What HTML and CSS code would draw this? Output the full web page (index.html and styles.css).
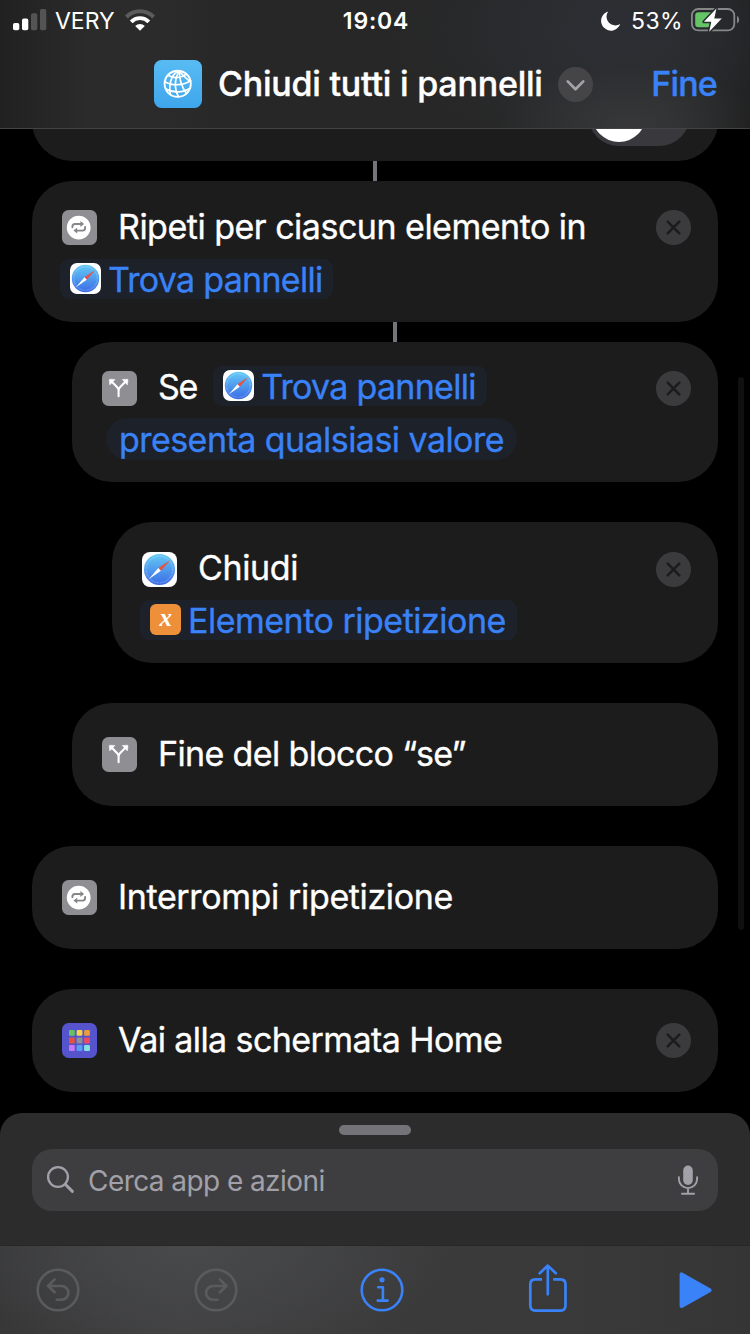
FILE: index.html
```
<!DOCTYPE html>
<html lang="it">
<head>
<meta charset="utf-8">
<title>Chiudi tutti i pannelli</title>
<link rel="stylesheet" href="styles.css">
</head>
<body>
<svg class="defs" width="0" height="0" aria-hidden="true">
  <defs>
    <linearGradient id="safari-blue" x1="0" y1="0" x2="0" y2="1">
      <stop offset="0" stop-color="#63cbf6"/>
      <stop offset="1" stop-color="#3b6be6"/>
    </linearGradient>
    <symbol id="i-safari" viewBox="0 0 35 35">
      <rect width="35" height="35" rx="8" fill="#fff"/>
      <circle cx="17.5" cy="17.5" r="15.5" fill="url(#safari-blue)"/>
      <circle cx="17.5" cy="17.5" r="13.3" fill="none" stroke="#fff" stroke-opacity=".3" stroke-width="1.4" stroke-dasharray=".7 .7"/>
      <path d="M28.5 8 18.9 18.8 16.3 16.1Z" fill="#e8503f"/>
      <path d="M6.7 27.3 16.3 16.1 18.9 18.8Z" fill="#fff"/>
    </symbol>
    <symbol id="i-repeat" viewBox="0 0 35 35">
      <rect width="35" height="35" rx="6.5" fill="#8e8e93"/>
      <circle cx="16.7" cy="17.6" r="11.9" fill="#fff"/>
      <g fill="none" stroke="#85858a" stroke-width="1.9" stroke-linecap="round">
        <path d="M10.4 17.2V16.6Q10.4 14 13 14H19"/>
        <path d="M23.1 17V18Q23.1 20.6 20.5 20.6H14.5"/>
      </g>
      <path d="M18.4 11.1V16.9L22.1 14ZM15.2 17.7V23.5L11.4 20.6Z" fill="#85858a"/>
    </symbol>
    <symbol id="i-branch" viewBox="0 0 35 35">
      <rect width="35" height="35" rx="6.5" fill="#8e8e93"/>
      <path d="M16.6 25.2V19.6Q16.6 17.6 15.2 16.2L9.6 10.6M16.6 19.6Q16.6 17.6 18 16.2L23.6 10.6" fill="none" stroke="#fff" stroke-width="2.1" stroke-linecap="round"/>
      <path d="M7.2 9Q7.2 8.2 8 8.2L13 8.5 7.8 13.9ZM26 9Q26 8.2 25.2 8.2L20.2 8.5 25.4 13.9Z" fill="#fff" stroke="#fff" stroke-width=".5" stroke-linejoin="round"/>
    </symbol>
    <symbol id="i-close" viewBox="0 0 35 35">
      <circle cx="17.5" cy="17.5" r="17.5" fill="#3b3b3d"/>
      <path d="M11.7 11.7 23.3 23.3M23.3 11.7 11.7 23.3" stroke="#1c1c1d" stroke-width="2.6" stroke-linecap="round"/>
    </symbol>
  </defs>
</svg>

<div class="screen">
  <header class="header">
    <div class="status">
      <div class="status-left">
        <svg class="signal" width="34" height="22" viewBox="0 0 34 22">
          <rect x="0" y="14" width="6.3" height="7.3" rx="1.8" fill="#fff"/>
          <rect x="9" y="9.6" width="6.3" height="11.7" rx="1.8" fill="#fff"/>
          <rect x="18" y="4.3" width="6.3" height="17" rx="1.8" fill="#545454"/>
          <rect x="27" y="0" width="6.3" height="21.3" rx="1.8" fill="#545454"/>
        </svg>
        <span class="carrier">VERY</span>
        <svg class="wifi" width="30" height="22" viewBox="0 0 30 22">
          <g fill="none">
            <path d="M1.4 8A19.2 19.2 0 0 1 28.6 8" stroke="#5c5c5c" stroke-width="4"/>
            <path d="M6.2 12.8A12.4 12.4 0 0 1 23.8 12.8" stroke="#fff" stroke-width="3.9"/>
          </g>
          <path d="M10.2 17A6.9 6.9 0 0 1 19.8 17L15 21.8Z" fill="#fff"/>
        </svg>
      </div>
      <span class="clock">19:04</span>
      <div class="status-right">
        <svg class="moon" width="20" height="20" viewBox="0 0 20 20">
          <path d="M7.2.4A9.8 9.8 0 1 0 19.2 12.9 8.8 8.8 0 0 1 7.2.4Z" fill="#fff"/>
        </svg>
        <span class="percent">53%</span>
        <svg class="battery" width="49" height="26" viewBox="0 0 49 26">
          <rect x=".9" y="2" width="42.4" height="21.4" rx="6.4" fill="none" stroke="#868789" stroke-width="1.8"/>
          <path d="M46 8.8Q48.2 10.3 48.2 12.7T46 16.6Z" fill="#868789"/>
          <path d="M7.5 5.3H20.6V20.2H7.5Q4.2 20.2 4.2 16.9V8.6Q4.2 5.3 7.5 5.3Z" fill="#65c466"/>
          <path d="M25.4 1.5 12.9 14.8H20.3L18.2 24.8 30.7 11.6H23.3Z" fill="#fff" stroke="#2a2c2f" stroke-width="3" stroke-linejoin="round" paint-order="stroke"/>
        </svg>
      </div>
    </div>
    <div class="nav">
      <svg class="app-icon" width="48" height="48" viewBox="0 0 48 48">
        <defs>
          <linearGradient id="sky" x1="0" y1="0" x2="0" y2="1">
            <stop offset="0" stop-color="#58bbf3"/>
            <stop offset="1" stop-color="#3ea6ec"/>
          </linearGradient>
        </defs>
        <rect width="48" height="48" rx="7.5" fill="url(#sky)"/>
        <g fill="none" stroke="#fff" stroke-width="1.7" stroke-linecap="round">
          <circle cx="23.7" cy="23.8" r="13.1" stroke-width="1.9"/>
          <path d="M25.3 11.2C19.5 12.5 14.2 20.5 16.3 34.2"/>
          <path d="M25.3 11.2C20.8 17.5 19.8 28.5 24.5 36.6"/>
          <path d="M25.3 11.2C25.3 19 28.2 27.5 32.3 33.3"/>
          <path d="M25.3 11.2C28.5 14.5 32.5 19.5 36.3 21.2"/>
          <path d="M14.6 15.5C20 19 27.5 17.8 32.3 14.2"/>
          <path d="M11 21.8C17.5 26 29.5 25.8 36.6 20.5"/>
          <path d="M12 29C18.5 33 29.5 32.8 35.6 28.5"/>
        </g>
      </svg>
      <h1 class="nav-title">Chiudi tutti i pannelli</h1>
      <svg class="chevron" width="35" height="35" viewBox="0 0 35 35">
        <circle cx="17.5" cy="17.5" r="17.5" fill="#454548"/>
        <path d="M9.7 14.4 17.5 22.3 25.3 14.4" fill="none" stroke="#a3a3a8" stroke-width="2.7" stroke-linecap="round" stroke-linejoin="round"/>
      </svg>
      <span class="done">Fine</span>
    </div>
  </header>

  <main class="flow">
    <section class="card card-clipped">
      <span class="switch"><span class="knob"></span></span>
    </section>
    <div class="link"></div>

    <section class="card">
      <div class="line">
        <svg class="icon"><use href="#i-repeat"/></svg>
        <span class="label low">Ripeti per ciascun elemento in</span>
        <svg class="close"><use href="#i-close"/></svg>
      </div>
      <div class="line second">
        <span class="chip"><svg class="chip-icon"><use href="#i-safari"/></svg><span class="tighter">Trova pannelli</span></span>
      </div>
    </section>
    <div class="link indent"></div>

    <section class="card level-1">
      <div class="line">
        <svg class="icon"><use href="#i-branch"/></svg>
        <span class="label se">Se</span>
        <span class="chip"><svg class="chip-icon"><use href="#i-safari"/></svg><span class="tighter">Trova pannelli</span></span>
        <svg class="close"><use href="#i-close"/></svg>
      </div>
      <div class="line second near">
        <span class="chip pill">presenta qualsiasi valore</span>
      </div>
    </section>

    <section class="card level-2 apart">
      <div class="line">
        <svg class="icon drop"><use href="#i-safari"/></svg>
        <span class="label low loose">Chiudi</span>
        <svg class="close drop"><use href="#i-close"/></svg>
      </div>
      <div class="line second">
        <span class="chip">
          <svg class="chip-icon" viewBox="0 0 31 31">
            <rect width="31" height="31" rx="6" fill="#ee9039"/>
            <text class="var-x" x="15.4" y="21.5" text-anchor="middle">x</text>
          </svg>
          <span>Elemento ripetizione</span>
        </span>
      </div>
    </section>

    <section class="card short level-1 apart">
      <div class="line">
        <svg class="icon"><use href="#i-branch"/></svg>
        <span class="label tight">Fine del blocco “se”</span>
      </div>
    </section>

    <section class="card short apart">
      <div class="line">
        <svg class="icon"><use href="#i-repeat"/></svg>
        <span class="label loose">Interrompi ripetizione</span>
      </div>
    </section>

    <section class="card short apart">
      <div class="line">
        <svg class="icon" viewBox="0 0 35 35">
          <rect width="35" height="35" rx="6.5" fill="#5654cd"/>
          <rect x="7" y="7" width="5.8" height="5.8" rx="1" fill="#65c45f"/>
          <rect x="14.6" y="7" width="5.8" height="5.8" rx="1" fill="#f6d24b"/>
          <rect x="22.1" y="7" width="5.8" height="5.8" rx="1" fill="#ee9b3c"/>
          <rect x="7" y="14.6" width="5.8" height="5.8" rx="1" fill="#e9513f"/>
          <rect x="14.6" y="14.6" width="5.8" height="5.8" rx="1" fill="#8f8f94"/>
          <rect x="22.1" y="14.6" width="5.8" height="5.8" rx="1" fill="#ea4a63"/>
          <rect x="7" y="22.1" width="5.8" height="5.8" rx="1" fill="#c478f5"/>
          <rect x="14.6" y="22.1" width="5.8" height="5.8" rx="1" fill="#559ff5"/>
          <rect x="22.1" y="22.1" width="5.8" height="5.8" rx="1" fill="#86e2df"/>
        </svg>
        <span class="label home">Vai alla schermata Home</span>
        <svg class="close"><use href="#i-close"/></svg>
      </div>
    </section>
    <div class="scrollbar"></div>
  </main>

  <section class="sheet">
    <div class="grabber"></div>
    <div class="search">
      <svg width="30" height="30" viewBox="0 0 30 30">
        <circle cx="12" cy="12" r="9.9" fill="none" stroke="#a2a1a9" stroke-width="2.3"/>
        <path d="M19.2 19.2 26.4 26.4" stroke="#a2a1a9" stroke-width="2.9" stroke-linecap="round"/>
      </svg>
      <span class="placeholder">Cerca app e azioni</span>
      <svg width="22" height="30" viewBox="0 0 22 30">
        <rect x="6.2" y=".6" width="9.6" height="19.4" rx="4.8" fill="#a2a1a9"/>
        <path d="M1.9 12.1V14A9.1 9.1 0 0 0 20.1 14V12.1M11 23.4V28" fill="none" stroke="#a2a1a9" stroke-width="1.9" stroke-linecap="round"/>
        <path d="M5 28.7H17" stroke="#a2a1a9" stroke-width="2" stroke-linecap="round"/>
      </svg>
    </div>
  </section>

  <footer class="toolbar">
    <svg class="undo" width="44" height="44" viewBox="0 0 44 44">
      <g fill="none" stroke="#5a5b5c" stroke-width="2.6" stroke-linecap="round" stroke-linejoin="round">
        <circle cx="22" cy="22" r="20.3"/>
        <path d="M18.7 11.3 12 18 18.7 24.3M12 18H25.5A6.9 6.9 0 0 1 25.5 31.8H20.9"/>
      </g>
    </svg>
    <svg class="redo" width="44" height="44" viewBox="0 0 44 44">
      <g fill="none" stroke="#5a5b5c" stroke-width="2.6" stroke-linecap="round" stroke-linejoin="round">
        <circle cx="22" cy="22" r="20.3"/>
        <path d="M25.8 11.3 32.5 18 25.8 24.3M32.5 18H19A6.9 6.9 0 0 0 19 31.8H23.6"/>
      </g>
    </svg>
    <svg class="info" width="44" height="44" viewBox="0 0 44 44">
      <circle cx="22" cy="22" r="20.3" fill="none" stroke="#3a82f7" stroke-width="2.6"/>
      <circle cx="22" cy="11.8" r="2.6" fill="#3a82f7"/>
      <path d="M18.2 19.2H22.9V32.4M17.7 32.6H27.6" fill="none" stroke="#3a82f7" stroke-width="2.6" stroke-linecap="round" stroke-linejoin="round"/>
    </svg>
    <svg class="share" width="40" height="50" viewBox="0 0 40 50">
      <g fill="none" stroke="#3a82f7" stroke-width="2.7">
        <path d="M14 15.3H7.3Q2.3 15.3 2.3 20.3V41.6Q2.3 46.6 7.3 46.6H32.5Q37.5 46.6 37.5 41.6V20.3Q37.5 15.3 32.5 15.3H25.2"/>
        <path d="M11.7 9.3 19.8 1.6 27.8 9.3M19.8 2V30.3" stroke-linecap="round" stroke-linejoin="round"/>
      </g>
    </svg>
    <svg class="play" width="34" height="38" viewBox="0 0 34 38">
      <path d="M2.6 3.4V35L30.6 19.2Z" fill="#3a82f7" stroke="#3a82f7" stroke-width="4" stroke-linejoin="round"/>
    </svg>
  </footer>
</div>
</body>
</html>
```

FILE: styles.css
```
* {
  box-sizing: border-box;
}

body {
  margin: 0;
  background: #000;
  color: #fff;
  font-family: Inter, "Noto Sans", sans-serif;
}

svg {
  display: block;
  flex: none;
}

.defs {
  position: absolute;
}

.screen {
  display: flex;
  flex-direction: column;
  width: 750px;
  height: 1334px;
  overflow: hidden;
}

/* Header */

.header {
  flex: none;
  height: 129px;
  border-bottom: 1px solid #434344;
  background:
    radial-gradient(ellipse 130px 60px at 630px 125px, #3a3a3bcc, #3a3a3b00),
    radial-gradient(ellipse 230px 120px at 620px 30px, #2b2e33, #2b2e3300),
    linear-gradient(90deg, #212121 0, #2b2b2b 90px, #2b2b2b 160px, #272727 240px, #272727 480px, #2b2c2e 600px, #2b2c2d 660px, #1f1f1f 750px);
}

.status {
  display: grid;
  grid-template-columns: 1fr auto 1fr;
  height: 40px;
  padding: 0 10px 0 13px;
  font-size: 23px;
  line-height: 40px;
}

.status-left,
.status-right {
  display: flex;
  align-items: flex-start;
}

.status-right {
  justify-content: flex-end;
}

.signal {
  margin-top: 9px;
}

.carrier {
  margin: 1px 10px 0 8px;
}

.wifi {
  margin-top: 9px;
}

.clock {
  margin: 1px 1px 0 0;
  font-weight: 600;
  letter-spacing: .8px;
}

.moon {
  margin: 11px 10px 0 0;
}

.percent {
  margin: 1px 8px 0 0;
  letter-spacing: .4px;
}

.battery {
  margin-top: 7px;
}

.nav {
  display: flex;
  align-items: center;
  height: 88px;
  padding: 0 33px 0 154px;
}

.nav-title,
.done {
  margin: 0;
  font-size: 34px;
  font-weight: 500;
  line-height: 42px;
  -webkit-text-stroke: .4px;
}

.nav-title {
  margin-left: 16px;
  letter-spacing: -.22px;
}

.chevron {
  margin-left: 15px;
}

.done {
  margin-left: auto;
  color: #3a82f7;
  letter-spacing: -.8px;
}

/* Action list */

.flow {
  position: relative;
  flex: 1;
  min-height: 0;
  padding: 0 32px;
  overflow: hidden;
}

.card {
  height: 141px;
  padding: 24px 27px 0 28px;
  border-radius: 40px;
  background: #1c1c1c;
}

.short {
  height: 103px;
  padding-top: 29px;
}

.level-1 {
  height: 140px;
  margin-left: 40px;
}

.level-1.short {
  height: 103px;
}

.level-2 {
  margin-left: 80px;
}

.apart {
  margin-top: 40px;
}

.card-clipped {
  display: flex;
  align-items: flex-end;
  justify-content: flex-end;
  height: 102px;
  margin-top: -70px;
  padding: 0 28px 15px 0;
}

.switch {
  display: flex;
  width: 102px;
  height: 62px;
  padding: 4px;
  border-radius: 31px;
  background: #39383d;
}

.knob {
  width: 54px;
  height: 54px;
  border-radius: 50%;
  background: #fff;
}

.link {
  width: 4px;
  height: 20px;
  margin: 0 auto;
  background: #74747a;
}

.indent {
  margin-left: 361px;
}

.line {
  display: flex;
  align-items: flex-start;
  height: 40px;
  font-size: 34px;
  line-height: 42px;
  letter-spacing: -.5px;
  white-space: nowrap;
  -webkit-text-stroke: .35px;
}

.second {
  margin-top: 14px;
}

.near {
  margin-top: 12px;
}

.icon {
  width: 35px;
  height: 35px;
  margin: 5px 21px 0 2px;
}

.low {
  margin-top: 1px;
}

.short .label {
  margin-top: 1px;
}

.tight {
  letter-spacing: -.64px;
}

.tighter {
  letter-spacing: -.72px;
}

.loose {
  letter-spacing: -.37px;
}

.home {
  letter-spacing: -.58px;
}

.se {
  margin-right: 16px;
  letter-spacing: -1.2px;
}

.close {
  width: 35px;
  height: 35px;
  margin: 5px 0 0 auto;
}

.drop {
  margin-top: 6px;
}

.chip {
  display: flex;
  gap: 7px;
  height: 40px;
  padding: 0 11px 0 10px;
  border-radius: 9px;
  background: #1d2129;
  color: #3a82f7;
}

.chip-icon {
  width: 31px;
  height: 31px;
  margin-top: 4px;
}

.var-x {
  fill: #fff;
  font: italic bold 25px "Liberation Serif", serif;
}

.pill {
  height: 42px;
  margin-left: 6px;
  padding: 0 13px;
  border-radius: 21px;
  line-height: 44px;
  letter-spacing: -.55px;
}

.scrollbar {
  position: absolute;
  top: 248px;
  right: 6px;
  width: 6px;
  height: 553px;
  border-radius: 3px;
  background: #101010;
}

/* Search sheet */

.sheet {
  flex: none;
  height: 132px;
  padding: 12px 32px 0;
  border-radius: 22px 22px 0 0;
  background: #2c2c2c;
}

.grabber {
  width: 72px;
  height: 10px;
  margin: 0 auto 14px;
  border-radius: 5px;
  background: #747378;
}

.search {
  display: flex;
  align-items: center;
  height: 62px;
  padding: 0 19px 0 14px;
  border-radius: 20px;
  background: #3e3e40;
}

.placeholder {
  flex: 1;
  margin: 2px 0 0 12px;
  color: #a2a1a9;
  font-size: 28px;
  letter-spacing: -.57px;
}

/* Bottom toolbar */

.toolbar {
  display: flex;
  flex: none;
  align-items: center;
  height: 89px;
  padding: 0 0 0 35.5px;
  border-top: 1px solid #272727;
  background:
    radial-gradient(ellipse 270px 110px at 190px 0, #48494b, #48494b00),
    linear-gradient(90deg, #373738 0, #414142 180px, #3a3a3b 420px, #393939 620px, #353536 750px);
}

.redo {
  margin-left: 114px;
}

.info {
  margin-left: 122px;
}

.share {
  margin: -2px 111px 0 124px;
}
```
